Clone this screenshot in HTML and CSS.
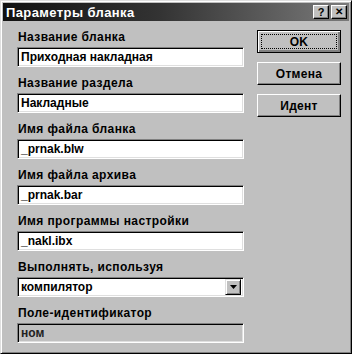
FILE: index.html
```html
<!DOCTYPE html>
<html lang="ru">
<head>
  <meta charset="UTF-8" />
  <title>Параметры бланка</title>
  <link rel="stylesheet" href="styles.css">
</head>
<body>
  <div class="window">
    <div class="title-bar">
      <span class="title-text">Параметры бланка</span>
      <div class="title-buttons">
        <span class="title-btn">?</span>
        <span class="title-btn close">✕</span>
      </div>
    </div>

    <div class="content">
      <div class="fields">
        <div class="field">
          <div class="label">Название бланка</div>
          <div class="edit">Приходная накладная</div>
        </div>
        <div class="field">
          <div class="label">Название раздела</div>
          <div class="edit">Накладные</div>
        </div>
        <div class="field">
          <div class="label">Имя файла бланка</div>
          <div class="edit">_prnak.blw</div>
        </div>
        <div class="field">
          <div class="label">Имя файла архива</div>
          <div class="edit">_prnak.bar</div>
        </div>
        <div class="field">
          <div class="label">Имя программы настройки</div>
          <div class="edit">_nakl.ibx</div>
        </div>
        <div class="field">
          <div class="label">Выполнять, используя</div>
          <div class="edit combo">
            <span class="combo-text">компилятор</span>
            <span class="combo-btn">
              <svg width="7" height="4" viewBox="0 0 7 4"><path d="M0 0h7L3.5 4z" fill="#000"/></svg>
            </span>
          </div>
        </div>
        <div class="field">
          <div class="label">Поле-идентификатор</div>
          <div class="edit disabled">ном</div>
        </div>
      </div>

      <div class="buttons">
        <div class="btn default"><span class="focus">OK</span></div>
        <div class="btn">Отмена</div>
        <div class="btn">Идент</div>
      </div>
    </div>
  </div>
</body>
</html>
```

FILE: styles.css
```css
body {
  margin: 0;
  padding: 0;
  background-color: #c0c0c0;
  font-family: "Liberation Sans", Arial, sans-serif;
  font-size: 12px;
  font-weight: bold;
  color: black;
}

.window {
  width: 352px;
  height: 354px;
  box-sizing: border-box;
  background-color: #c0c0c0;
  border-top: 1px solid #dfdfdf;
  border-left: 1px solid #dfdfdf;
  border-right: 1px solid #000;
  border-bottom: 1px solid #000;
  box-shadow: inset 1px 1px 0 #fff, inset -1px -1px 0 #808080;
  padding: 2px;
}

.title-bar {
  height: 18px;
  display: flex;
  align-items: center;
  justify-content: space-between;
  background: linear-gradient(to right, #111 0%, #333 45%, #7a7a7a 100%);
  padding: 0 2px 0 3px;
}

.title-text {
  color: white;
  font-size: 13px;
  font-weight: bold;
  letter-spacing: 0.4px;
}

.title-buttons {
  display: flex;
  gap: 2px;
}

.title-btn {
  width: 16px;
  height: 14px;
  box-sizing: border-box;
  background-color: #c0c0c0;
  border-top: 1px solid #fff;
  border-left: 1px solid #fff;
  border-right: 1px solid #000;
  border-bottom: 1px solid #000;
  box-shadow: inset -1px -1px 0 #808080;
  display: flex;
  align-items: center;
  justify-content: center;
  font-size: 11px;
  line-height: 1;
}

.title-btn.close {
  font-size: 10px;
}

.content {
  display: flex;
  padding: 8px 0 0 14px;
}

.fields {
  width: 227px;
  display: flex;
  flex-direction: column;
  gap: 8px;
}

.label {
  height: 16px;
  line-height: 16px;
  padding-left: 1px;
  margin-bottom: 2px;
  letter-spacing: 0.4px;
}

.edit {
  height: 20px;
  box-sizing: border-box;
  background-color: white;
  border-top: 1px solid #808080;
  border-left: 1px solid #808080;
  border-right: 1px solid #fff;
  border-bottom: 1px solid #fff;
  box-shadow: inset 1px 1px 0 #000, inset -1px -1px 0 #dfdfdf;
  padding: 0 3px;
  line-height: 18px;
  white-space: nowrap;
}

.combo {
  display: flex;
  justify-content: space-between;
  padding-right: 2px;
}

.combo-btn {
  width: 16px;
  height: 16px;
  margin-top: 1px;
  box-sizing: border-box;
  background-color: #c0c0c0;
  border-top: 1px solid #dfdfdf;
  border-left: 1px solid #dfdfdf;
  border-right: 1px solid #000;
  border-bottom: 1px solid #000;
  box-shadow: inset 1px 1px 0 #fff, inset -1px -1px 0 #808080;
  display: flex;
  align-items: center;
  justify-content: center;
}

.disabled {
  background-color: #c0c0c0;
  color: #222;
}

.buttons {
  margin-left: 13px;
  display: flex;
  flex-direction: column;
  gap: 9px;
  padding-top: 1px;
}

.btn {
  width: 84px;
  height: 23px;
  box-sizing: border-box;
  background-color: #c0c0c0;
  border-top: 1px solid #fff;
  border-left: 1px solid #fff;
  border-right: 1px solid #000;
  border-bottom: 1px solid #000;
  box-shadow: inset -1px -1px 0 #808080;
  display: flex;
  align-items: center;
  justify-content: center;
  letter-spacing: 0.3px;
}

.btn.default {
  border: 1px solid #000;
  box-shadow: inset 1px 1px 0 #fff, inset -2px -2px 0 #808080;
  padding: 3px;
}

.focus {
  flex: 1;
  align-self: stretch;
  border: 1px dotted #000;
  display: flex;
  align-items: center;
  justify-content: center;
}
```
